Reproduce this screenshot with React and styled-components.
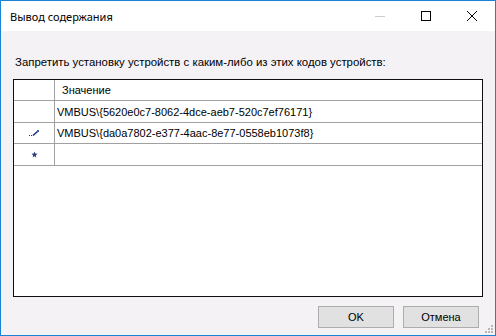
import styled, { createGlobalStyle } from "styled-components";

const GlobalStyle = createGlobalStyle`
html, body {
  margin:0;
  padding:0;
  background:#ffffff;
}
* { box-sizing:border-box; }
`

const Window = styled.div`
width:496px;
height:336px;
border:1px solid #1883d7;
display:flex;
flex-direction:column;
font-family:"Liberation Sans", Arial, sans-serif;
font-size:11px;
color:#000;
position:relative;
`
const TitleBar = styled.div`
height:30px;
background:#fff;
display:flex;
align-items:center;
justify-content:space-between;
`
const Title = styled.div`
font-family:"Noto Sans", "Liberation Sans", sans-serif;
font-size:11px;
padding-left:9px;
color:#000;
`
const Controls = styled.div`
display:flex;
height:100%;
`
const ControlButton = styled.div`
width:46px;
height:100%;
display:flex;
align-items:center;
justify-content:center;
`
const Body = styled.div`
flex:1;
background:#f5f2f6;
display:flex;
flex-direction:column;
padding:23px 12px 0 12px;
`
const Label = styled.div`
padding-left:2px;
height:16px;
line-height:16px;
font-size:11.4px;
`
const Grid = styled.div`
margin-top:9px;
height:218px;
border:1px solid #101010;
background:#fff;
`
const Row = styled.div`
display:flex;
height:${({$h})=>$h}px;
border-bottom:1px solid #a0a0a0;
`
const RowHeader = styled.div`
width:41px;
border-right:1px solid #a0a0a0;
display:flex;
align-items:center;
justify-content:center;
`
const Cell = styled.div`
flex:1;
display:flex;
align-items:center;
padding-left:${({$pad})=>$pad}px;
white-space:nowrap;
`
const Footer = styled.div`
display:flex;
justify-content:flex-end;
gap:9px;
padding:9px 4px 0 0;
`
const Button = styled.div`
width:76px;
height:22px;
background:#e1e1e1;
border:1px solid #adadad;
display:flex;
align-items:center;
justify-content:center;
`
const Grip = styled.svg`
position:absolute;
right:1px;
bottom:1px;
`

function Pencil(){
    return (
        <svg width="12" height="8" viewBox="0 0 12 8">
            <rect x="1" y="6" width="1" height="1" fill="#20306a"/>
            <rect x="3" y="6" width="1" height="1" fill="#20306a"/>
            <path d="M5 6.5 L10 2" stroke="#1a2f80" strokeWidth="1.6"/>
            <rect x="9" y="1" width="2" height="2" fill="#3a5cc0"/>
        </svg>
    )
}

function NewRowMark(){
    return (
        <svg width="7" height="7" viewBox="0 0 7 7">
            <path d="M3.5 0.5 L4.3 2.5 L6.5 2.7 L4.8 4.2 L5.3 6.5 L3.5 5.3 L1.7 6.5 L2.2 4.2 L0.5 2.7 L2.7 2.5 Z" fill="#2b3f80"/>
        </svg>
    )
}

export default function App(){
    return (
        <>
        <GlobalStyle/>
        <Window>
            <TitleBar>
                <Title>Вывод содержания</Title>
                <Controls>
                    <ControlButton>
                        <svg width="10" height="10"><line x1="0" y1="5.5" x2="10" y2="5.5" stroke="#cccccc"/></svg>
                    </ControlButton>
                    <ControlButton>
                        <svg width="10" height="10"><rect x="0.5" y="0.5" width="9" height="9" fill="none" stroke="#000"/></svg>
                    </ControlButton>
                    <ControlButton>
                        <svg width="10" height="10"><path d="M0 0 L10 10 M10 0 L0 10" stroke="#000" strokeWidth="1"/></svg>
                    </ControlButton>
                </Controls>
            </TitleBar>
            <Body>
                <Label>Запретить установку устройств с каким-либо из этих кодов устройств:</Label>
                <Grid>
                    <Row $h={21}>
                        <RowHeader/>
                        <Cell $pad={7}>Значение</Cell>
                    </Row>
                    <Row $h={22}>
                        <RowHeader/>
                        <Cell $pad={2}>VMBUS\{"{"}5620e0c7-8062-4dce-aeb7-520c7ef76171{"}"}</Cell>
                    </Row>
                    <Row $h={21}>
                        <RowHeader><Pencil/></RowHeader>
                        <Cell $pad={2}>VMBUS\{"{"}da0a7802-e377-4aac-8e77-0558eb1073f8{"}"}</Cell>
                    </Row>
                    <Row $h={22}>
                        <RowHeader><NewRowMark/></RowHeader>
                        <Cell/>
                    </Row>
                </Grid>
                <Footer>
                    <Button>OK</Button>
                    <Button>Отмена</Button>
                </Footer>
            </Body>
            <Grip width="10" height="10" viewBox="0 0 10 10">
                {[[7,1],[7,4],[4,4],[7,7],[4,7],[1,7]].map(([x,y],i)=>(
                    <rect key={i} x={x} y={y} width="2" height="2" fill="#b8b8b8"/>
                ))}
            </Grip>
        </Window>
        </>
    )
}
